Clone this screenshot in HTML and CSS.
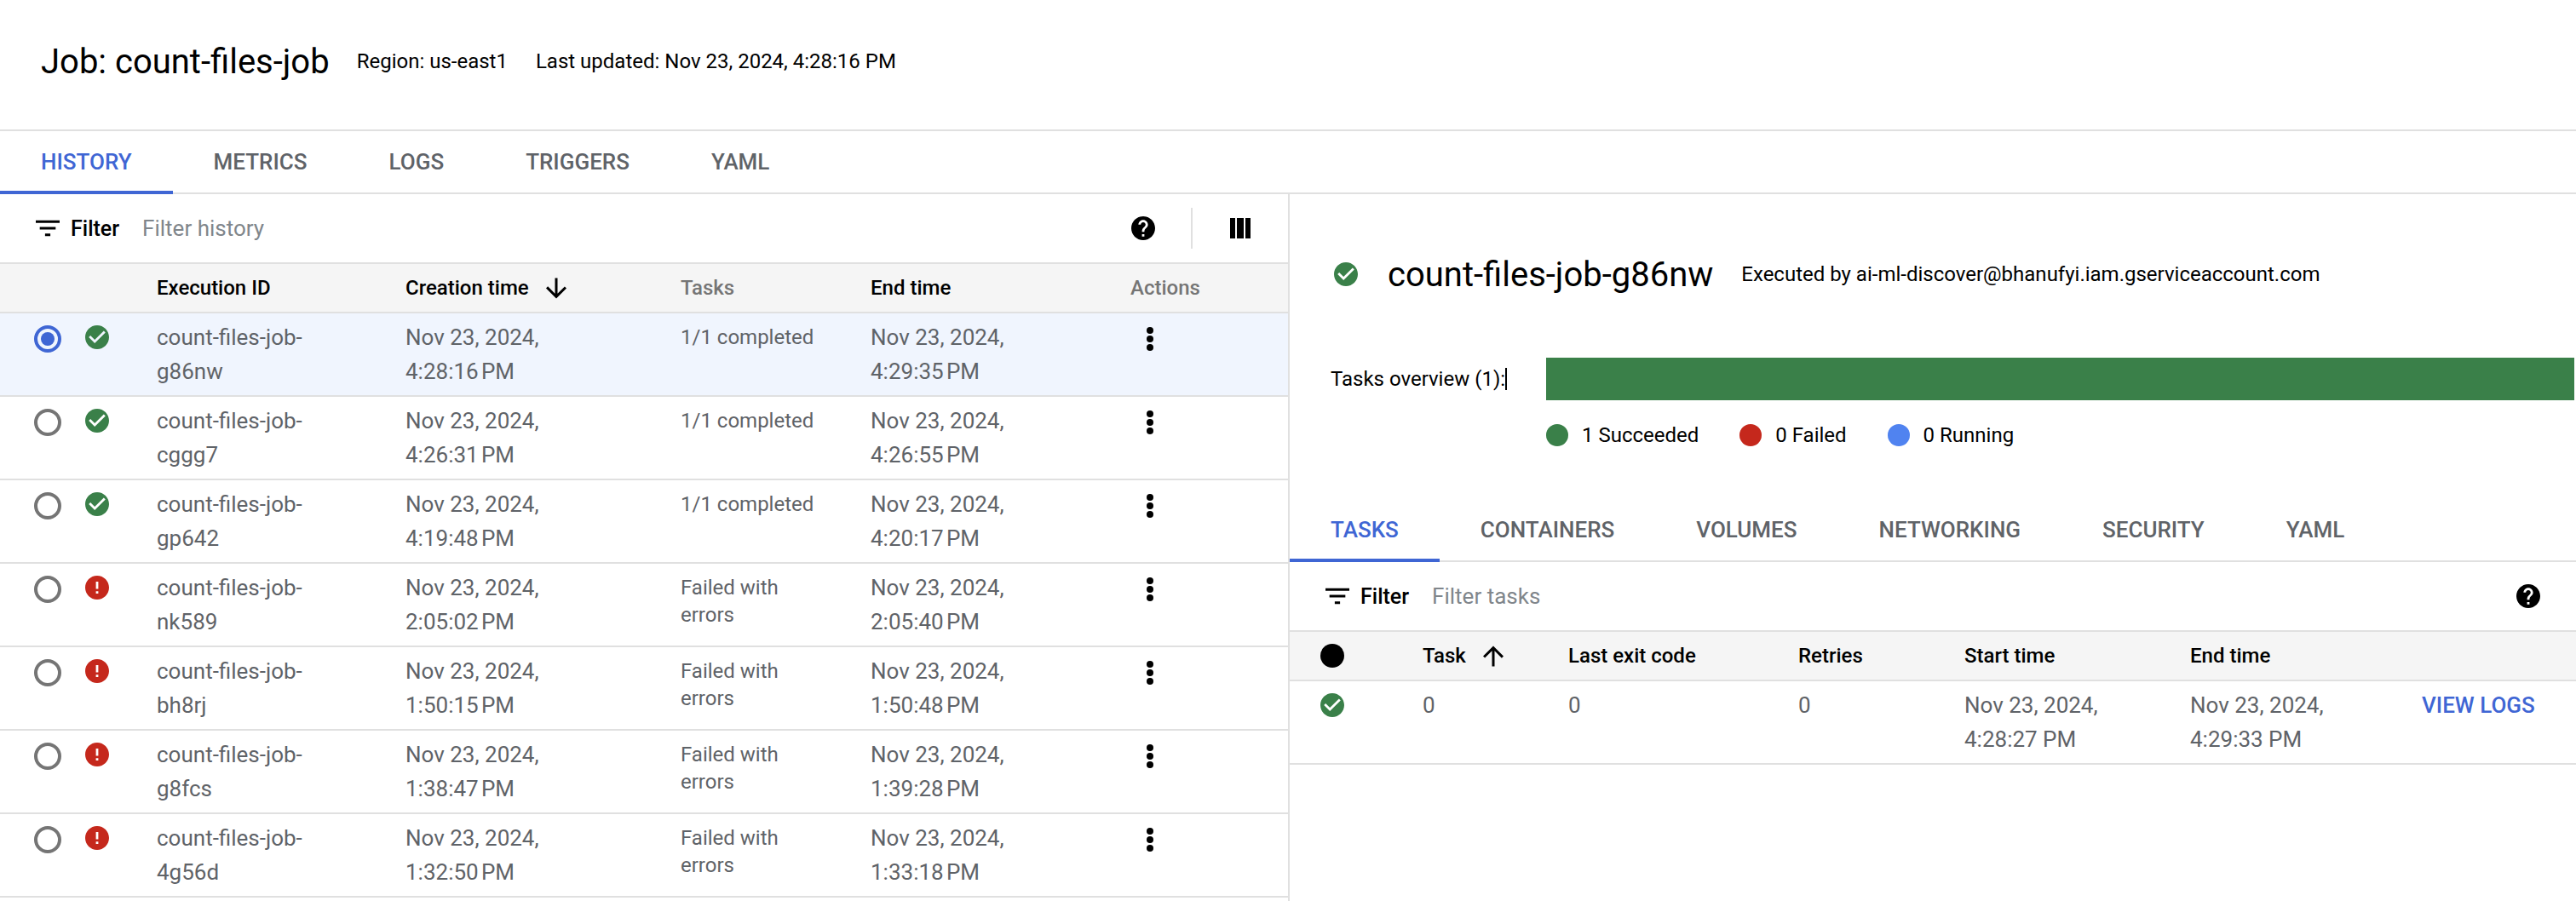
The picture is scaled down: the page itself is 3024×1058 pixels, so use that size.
FILE: index.html
```html
<!DOCTYPE html>
<html lang="en">
<head>
    <meta charset="UTF-8">
    <title>Job: count-files-job</title>
    <link rel="stylesheet" href="styles.css">
</head>
<body>
    <svg class="defs" width="0" height="0">
      <symbol id="i-check" viewBox="2 2 20 20"><path d="M12 2C6.48 2 2 6.48 2 12s4.48 10 10 10 10-4.48 10-10S17.52 2 12 2zm-2 15l-5-5 1.41-1.41L10 14.17l7.59-7.59L19 8l-9 9z"/></symbol>
      <symbol id="i-error" viewBox="2 2 20 20"><path d="M12 2C6.48 2 2 6.48 2 12s4.48 10 10 10 10-4.48 10-10S17.52 2 12 2zm1 15h-2v-2h2v2zm0-4h-2V7h2v6z"/></symbol>
      <symbol id="i-help" viewBox="2 2 20 20"><path d="M12 2C6.48 2 2 6.48 2 12s4.48 10 10 10 10-4.48 10-10S17.52 2 12 2zm1 17h-2v-2h2v2zm2.07-7.75l-.9.92C13.45 12.9 13 13.5 13 15h-2v-.5c0-1.1.45-2.1 1.17-2.83l1.24-1.26c.37-.36.59-.86.59-1.41 0-1.1-.9-2-2-2s-2 .9-2 2H8c0-2.21 1.79-4 4-4s4 1.79 4 4c0 .88-.36 1.68-.93 2.25z"/></symbol>
      <symbol id="i-filter" viewBox="3 6 18 12"><path d="M10 18h4v-2h-4v2zM3 6v2h18V6H3zm3 7h12v-2H6v2z"/></symbol>
      <symbol id="i-down" viewBox="4 4 16 16"><path d="M20 12l-1.41-1.41L13 16.17V4h-2v12.17l-5.58-5.59L4 12l8 8 8-8z"/></symbol>
      <symbol id="i-up" viewBox="4 4 16 16"><path d="M4 12l1.41 1.41L11 7.83V20h2V7.83l5.58 5.59L20 12l-8-8-8 8z"/></symbol>
      <symbol id="i-columns" viewBox="0 0 24 24"><path d="M0 0h6v24H0zM8 0h8v24H8zM18 0h6v24h-6z"/></symbol>
      <symbol id="i-more" viewBox="0 0 8 28"><circle cx="4" cy="4" r="4"/><circle cx="4" cy="14" r="4"/><circle cx="4" cy="24" r="4"/></symbol>
    </svg>

    <header class="page-head">
      <h1 class="job-title">Job: count-files-job</h1>
      <span class="job-meta">Region: us-east1</span>
      <span class="job-meta">Last updated: Nov 23, 2024, 4:28:16 PM</span>
    </header>

    <nav class="tabs">
      <a class="tab active">HISTORY</a>
      <a class="tab">METRICS</a>
      <a class="tab">LOGS</a>
      <a class="tab">TRIGGERS</a>
      <a class="tab">YAML</a>
    </nav>

    <main class="panes">
      <section class="pane-left">
        <div class="filter-bar">
          <svg class="icon-filter"><use href="#i-filter"/></svg>
          <span class="filter-label">Filter</span>
          <span class="filter-hint">Filter history</span>
          <svg class="icon-help"><use href="#i-help"/></svg>
          <span class="bar-divider"></span>
          <svg class="icon-columns"><use href="#i-columns"/></svg>
        </div>

        <div class="row-exec row-head">
          <div></div>
          <div></div>
          <div>Execution ID</div>
          <div class="sorted">Creation time <svg class="icon-sort"><use href="#i-down"/></svg></div>
          <div class="muted">Tasks</div>
          <div>End time</div>
          <div class="muted">Actions</div>
        </div>

        <div class="row-exec selected">
          <div><span class="radio on"></span></div>
          <div><svg class="icon-status ok"><use href="#i-check"/></svg></div>
          <div>count-files-job-<br>g86nw</div>
          <div>Nov 23, 2024,<br>4:28:16&#8239;PM</div>
          <div class="task-note">1/1 completed</div>
          <div>Nov 23, 2024,<br>4:29:35&#8239;PM</div>
          <div><svg class="icon-more"><use href="#i-more"/></svg></div>
        </div>
        <div class="row-exec">
          <div><span class="radio"></span></div>
          <div><svg class="icon-status ok"><use href="#i-check"/></svg></div>
          <div>count-files-job-<br>cggg7</div>
          <div>Nov 23, 2024,<br>4:26:31&#8239;PM</div>
          <div class="task-note">1/1 completed</div>
          <div>Nov 23, 2024,<br>4:26:55&#8239;PM</div>
          <div><svg class="icon-more"><use href="#i-more"/></svg></div>
        </div>
        <div class="row-exec">
          <div><span class="radio"></span></div>
          <div><svg class="icon-status ok"><use href="#i-check"/></svg></div>
          <div>count-files-job-<br>gp642</div>
          <div>Nov 23, 2024,<br>4:19:48&#8239;PM</div>
          <div class="task-note">1/1 completed</div>
          <div>Nov 23, 2024,<br>4:20:17&#8239;PM</div>
          <div><svg class="icon-more"><use href="#i-more"/></svg></div>
        </div>
        <div class="row-exec">
          <div><span class="radio"></span></div>
          <div><svg class="icon-status bad"><use href="#i-error"/></svg></div>
          <div>count-files-job-<br>nk589</div>
          <div>Nov 23, 2024,<br>2:05:02&#8239;PM</div>
          <div class="task-note">Failed with<br>errors</div>
          <div>Nov 23, 2024,<br>2:05:40&#8239;PM</div>
          <div><svg class="icon-more"><use href="#i-more"/></svg></div>
        </div>
        <div class="row-exec">
          <div><span class="radio"></span></div>
          <div><svg class="icon-status bad"><use href="#i-error"/></svg></div>
          <div>count-files-job-<br>bh8rj</div>
          <div>Nov 23, 2024,<br>1:50:15&#8239;PM</div>
          <div class="task-note">Failed with<br>errors</div>
          <div>Nov 23, 2024,<br>1:50:48&#8239;PM</div>
          <div><svg class="icon-more"><use href="#i-more"/></svg></div>
        </div>
        <div class="row-exec">
          <div><span class="radio"></span></div>
          <div><svg class="icon-status bad"><use href="#i-error"/></svg></div>
          <div>count-files-job-<br>g8fcs</div>
          <div>Nov 23, 2024,<br>1:38:47&#8239;PM</div>
          <div class="task-note">Failed with<br>errors</div>
          <div>Nov 23, 2024,<br>1:39:28&#8239;PM</div>
          <div><svg class="icon-more"><use href="#i-more"/></svg></div>
        </div>
        <div class="row-exec">
          <div><span class="radio"></span></div>
          <div><svg class="icon-status bad"><use href="#i-error"/></svg></div>
          <div>count-files-job-<br>4g56d</div>
          <div>Nov 23, 2024,<br>1:32:50&#8239;PM</div>
          <div class="task-note">Failed with<br>errors</div>
          <div>Nov 23, 2024,<br>1:33:18&#8239;PM</div>
          <div><svg class="icon-more"><use href="#i-more"/></svg></div>
        </div>
      </section>

      <section class="pane-right">
        <div class="exec-head">
          <svg class="icon-status ok"><use href="#i-check"/></svg>
          <h2 class="exec-title">count-files-job-g86nw</h2>
          <span class="exec-by">Executed by ai-ml-discover@bhanufyi.iam.gserviceaccount.com</span>
        </div>

        <div class="overview">
          <div class="overview-label">Tasks overview (1):<span class="caret"></span></div>
          <div class="overview-bar"></div>
        </div>

        <div class="legend">
          <span class="legend-item"><span class="dot green"></span>1 Succeeded</span>
          <span class="legend-item"><span class="dot red"></span>0 Failed</span>
          <span class="legend-item"><span class="dot blue"></span>0 Running</span>
        </div>

        <nav class="tabs sub-tabs">
          <a class="tab active">TASKS</a>
          <a class="tab">CONTAINERS</a>
          <a class="tab">VOLUMES</a>
          <a class="tab">NETWORKING</a>
          <a class="tab">SECURITY</a>
          <a class="tab">YAML</a>
        </nav>

        <div class="filter-bar sub-filter">
          <svg class="icon-filter"><use href="#i-filter"/></svg>
          <span class="filter-label">Filter</span>
          <span class="filter-hint">Filter tasks</span>
          <svg class="icon-help"><use href="#i-help"/></svg>
        </div>

        <div class="row-task row-head">
          <div><span class="head-dot"></span></div>
          <div class="sorted">Task <svg class="icon-sort"><use href="#i-up"/></svg></div>
          <div>Last exit code</div>
          <div>Retries</div>
          <div>Start time</div>
          <div>End time</div>
          <div></div>
        </div>
        <div class="row-task">
          <div><svg class="icon-status ok"><use href="#i-check"/></svg></div>
          <div>0</div>
          <div>0</div>
          <div>0</div>
          <div>Nov 23, 2024,<br>4:28:27 PM</div>
          <div>Nov 23, 2024,<br>4:29:33 PM</div>
          <div><a class="view-logs">VIEW LOGS</a></div>
        </div>
      </section>
    </main>
</body>
</html>
```

FILE: styles.css
```css
*{
  box-sizing: border-box;
}

html, body{
  height: 100%;
}

body{
  margin: 0;
  overflow: hidden;
  background-color: #fff;
  color: #000;
  font-family: Roboto, "Liberation Sans", sans-serif;
  font-size: 24px;
}

.defs{
  position: absolute;
}

/* page header */
.page-head{
  display: flex;
  align-items: center;
  height: 154px;
  padding: 0 0 8px 48px;
  border-bottom: 2px solid #e0e0e0;
}

.job-title{
  margin: 0 32px 0 0;
  font-size: 40px;
  font-weight: 400;
}

.job-meta{
  margin-right: 33px;
}

/* tabs */
.tabs{
  display: flex;
  height: 74px;
  border-bottom: 2px solid #e0e0e0;
}

.tab{
  height: 74px;
  padding: 21px 48px 0;
  color: #5f6368;
  font-size: 26px;
  font-weight: 500;
}

.tab.active{
  color: #3f66d4;
  border-bottom: 4px solid #3f66d4;
}

/* two panes */
.panes{
  display: flex;
  height: 830px;
}

.pane-left{
  width: 1514px;
  flex: none;
  border-right: 2px solid #e0e0e0;
}

.pane-right{
  flex: 1;
  min-width: 0;
}

/* filter bar */
.filter-bar{
  display: flex;
  align-items: center;
  height: 82px;
  padding-left: 42px;
  border-bottom: 2px solid #e0e0e0;
}

.icon-filter{
  width: 28px;
  height: 20px;
}

.filter-label{
  margin-left: 13px;
  font-size: 25px;
  font-weight: 500;
}

.filter-hint{
  margin-left: 27px;
  color: #80868b;
  font-size: 26px;
}

.icon-help{
  width: 28px;
  height: 28px;
  margin-left: auto;
}

.bar-divider{
  width: 2px;
  height: 48px;
  margin: 0 44px 0 42px;
  background-color: #e0e0e0;
}

.icon-columns{
  width: 24px;
  height: 24px;
  margin-right: 44px;
}

.sub-filter{
  padding-right: 42px;
}

/* tables */
.row-exec, .row-task{
  display: grid;
  height: 98px;
  padding-top: 8px;
  border-bottom: 2px solid #e0e0e0;
  color: #5f6368;
  font-size: 26px;
  line-height: 40px;
}

.row-exec{
  grid-template-columns: 100px 84px 292px 323px 223px 305px 1fr;
}

.row-task{
  grid-template-columns: 156px 171px 270px 195px 265px 272px 1fr;
}

.row-exec > :first-child{
  padding-left: 40px;
}

.row-task > :first-child{
  padding-left: 36px;
}

.row-head{
  height: 58px;
  padding-top: 8px;
  background-color: #f5f5f5;
  color: #000;
  font-size: 24px;
  font-weight: 500;
}

.row-head .muted{
  color: #757575;
}

.selected{
  background-color: #f0f5fe;
}

.task-note{
  padding-top: 4px;
  font-size: 24px;
  line-height: 32px;
}

.sorted{
  display: flex;
  align-items: center;
  height: 40px;
}

.icon-sort{
  width: 24px;
  height: 27px;
  margin-left: 20px;
}

.radio{
  display: flex;
  align-items: center;
  justify-content: center;
  width: 32px;
  height: 32px;
  margin-top: 6px;
  border: 4px solid #757575;
  border-radius: 50%;
}

.radio.on{
  border-color: #3f66d4;
}

.radio.on::after{
  content: "";
  width: 16px;
  height: 16px;
  border-radius: 50%;
  background-color: #3f66d4;
}

.icon-status{
  display: block;
  width: 28px;
  height: 28px;
  margin-top: 6px;
}

.ok{
  fill: #3a8049;
}

.bad{
  fill: #c5281c;
}

.icon-more{
  display: block;
  width: 8px;
  height: 28px;
  margin: 8px 0 0 19px;
}

.head-dot{
  display: block;
  width: 28px;
  height: 28px;
  margin-top: 6px;
  border-radius: 50%;
  background-color: #000;
}

.view-logs{
  color: #3f66d4;
  font-weight: 500;
}

/* execution summary */
.exec-head{
  display: flex;
  align-items: center;
  height: 44px;
  margin-top: 72px;
  padding-left: 52px;
}

.exec-head .icon-status{
  margin-top: 0;
}

.exec-title{
  margin: 0 33px 0 35px;
  font-size: 40px;
  font-weight: 400;
}

.overview{
  display: flex;
  align-items: center;
  height: 50px;
  margin-top: 76px;
  padding: 0 2px 0 48px;
}

.overview-label{
  display: flex;
  align-items: center;
  width: 253px;
}

.caret{
  width: 2px;
  height: 26px;
  background-color: #000;
}

.overview-bar{
  flex: 1;
  height: 50px;
  background-color: #3a8049;
}

.legend{
  display: flex;
  height: 26px;
  margin: 28px 0 62px 301px;
  gap: 48px;
}

.legend-item{
  display: flex;
  align-items: center;
}

.dot{
  width: 26px;
  height: 26px;
  margin-right: 16px;
  border-radius: 50%;
}

.green{
  background-color: #3a8049;
}

.red{
  background-color: #c5281c;
}

.blue{
  background-color: #5083f0;
}
```
